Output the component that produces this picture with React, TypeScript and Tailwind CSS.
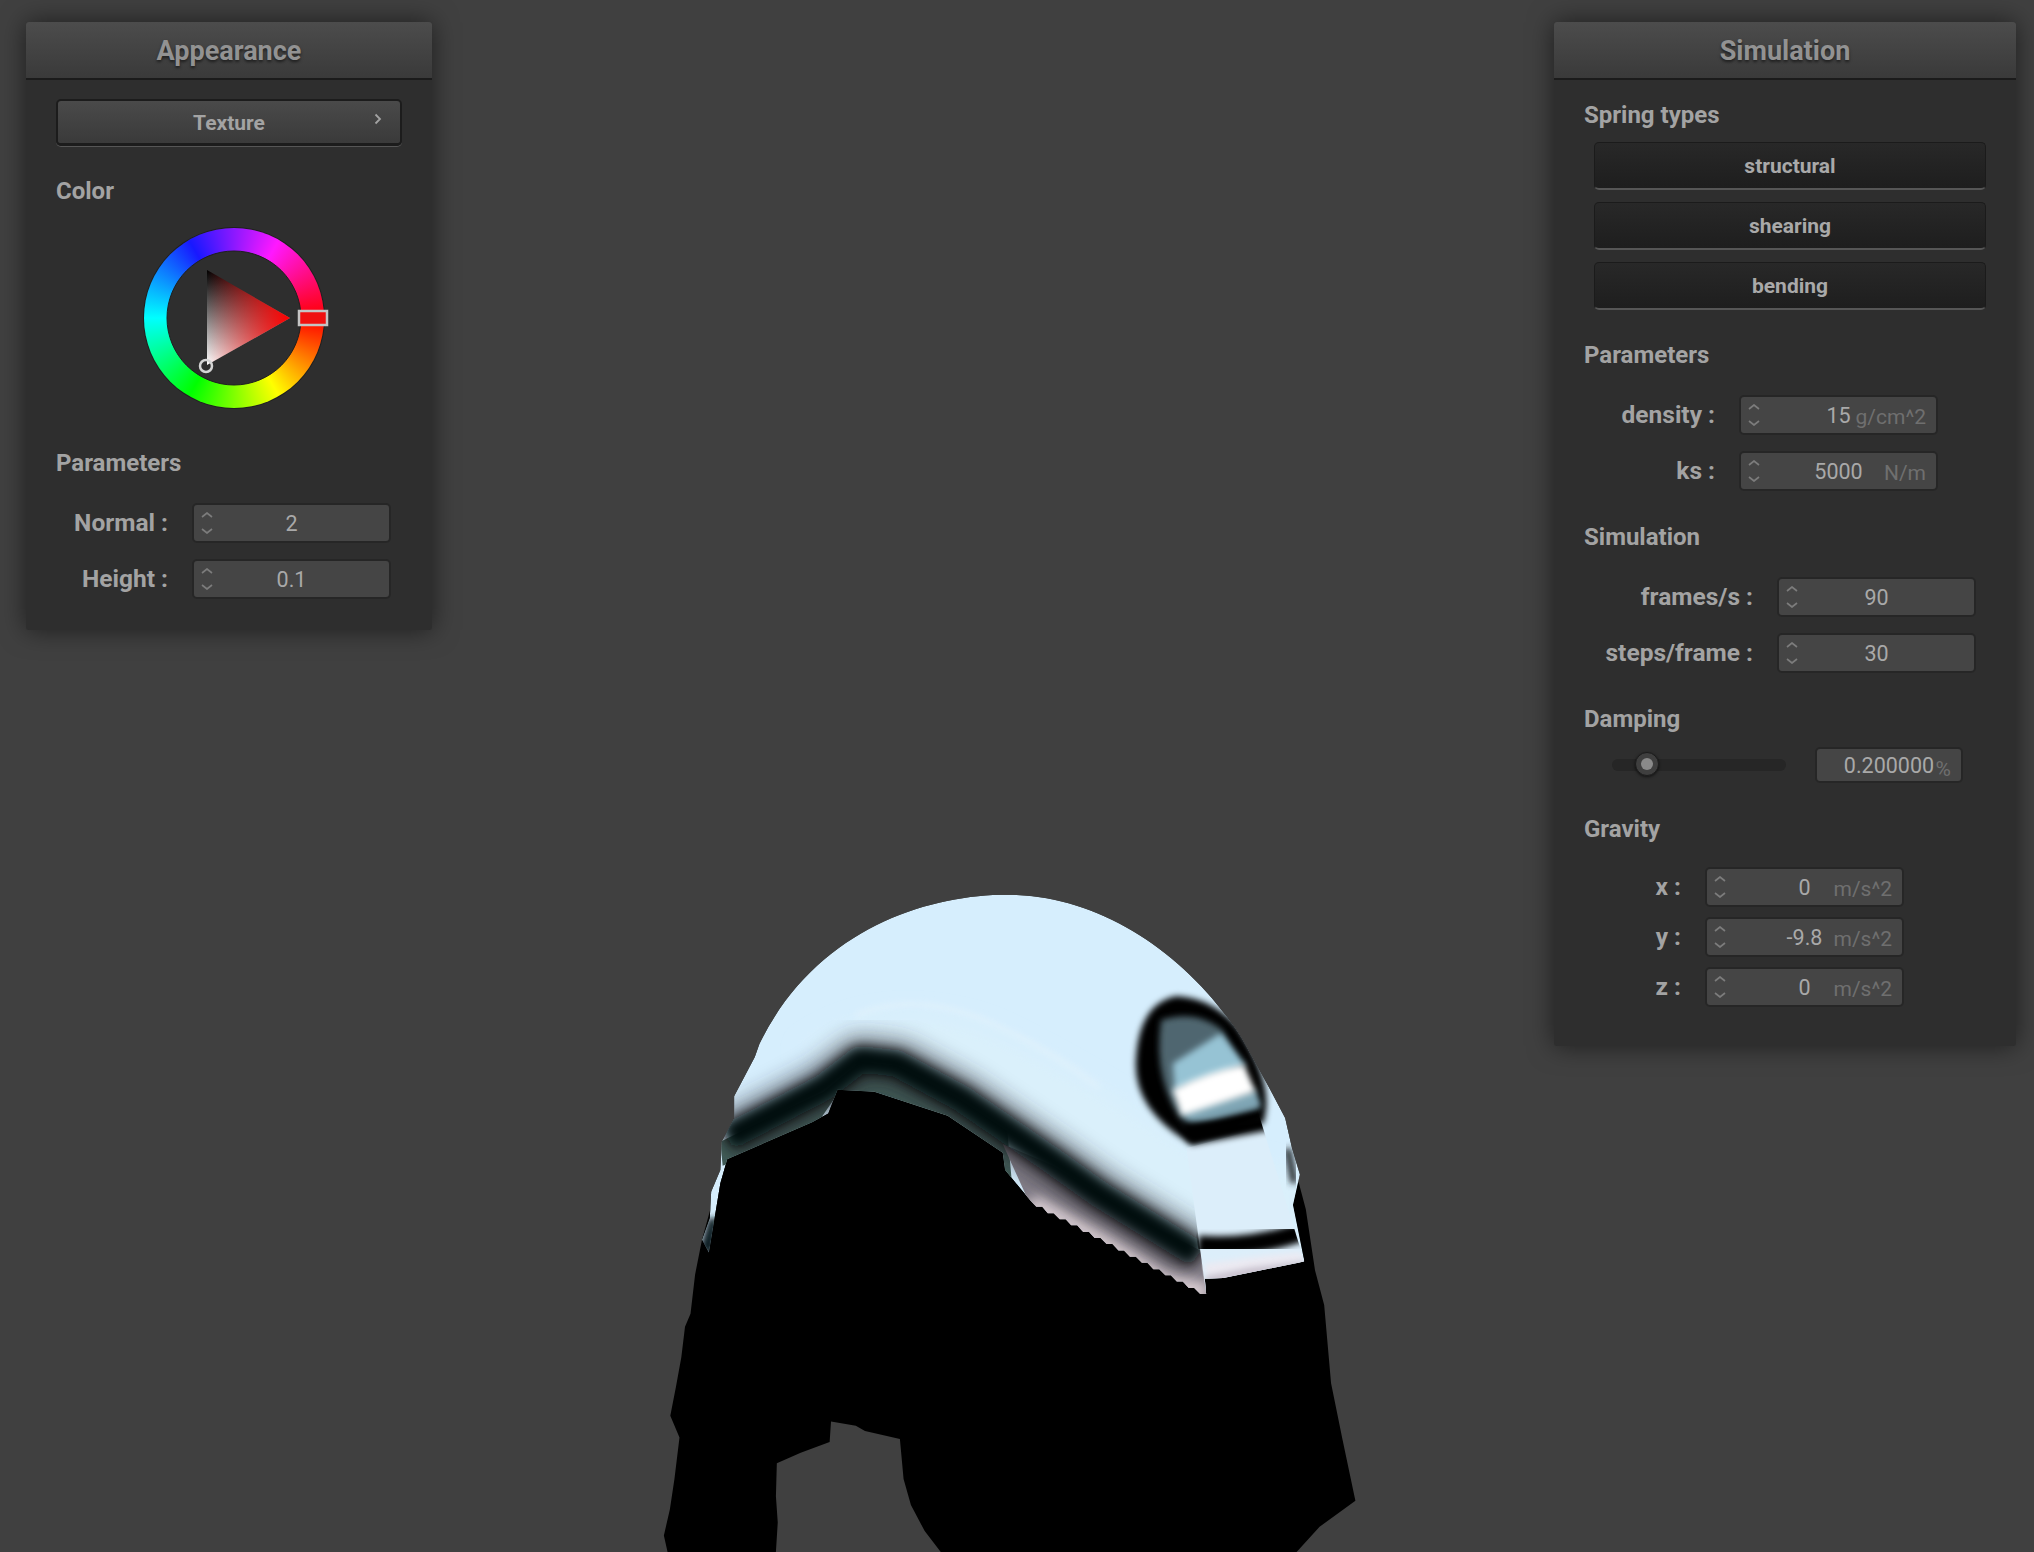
import type { ReactNode } from 'react';

function SectionLabel({ children, className }: { children: ReactNode; className: string }) {
  return <div className={`h-[26px] pl-[30px] text-[24px] leading-[26px] font-bold text-[#a3a3a3] ${className}`}>{children}</div>;
}

function PanelHeader({ title }: { title: string }) {
  return (
    <div className="flex h-[58px] items-center justify-center rounded-t-[3px] border-b-2 border-[#1b1b1b] bg-gradient-to-b from-[#4c4c4c] to-[#3a3a3a] pt-[3px] text-[27px] font-bold text-[#929292] [text-shadow:0_2px_3px_rgba(0,0,0,0.55)]">
      {title}
    </div>
  );
}

function Spinner() {
  return (
    <svg width="12" height="22" viewBox="0 0 12 22" fill="none" stroke="#7c7c7c" strokeWidth="1.7" className="absolute top-[7px] left-[7px]">
      <path d="M1 5 L6 1 L11 5" />
      <path d="M1 17 L6 21 L11 17" />
    </svg>
  );
}

function NumberField({ value, unit, spinner = true, className = 'h-[40px] w-[199px]' }: { value: string; unit?: string; spinner?: boolean; className?: string }) {
  return (
    <div className={`relative flex shrink-0 items-center justify-center rounded-[5px] border-2 border-[#262626] bg-[#454545] pt-[3px] text-[21.5px] text-[#a9a9a9] ${className}`}>
      {spinner && <Spinner />}
      {value}
      {unit && <span className="absolute top-[5px] right-[10px] text-[21px] text-[#6f6f6f]">{unit}</span>}
    </div>
  );
}

function FieldRow({ label, value, unit, labelClass, className }: { label: string; value: string; unit?: string; labelClass: string; className: string }) {
  return (
    <div className={`flex items-center gap-[24px] ${className}`}>
      <div className={`text-right text-[24.5px] font-bold text-[#a3a3a3] ${labelClass}`}>{label}</div>
      <NumberField value={value} unit={unit} />
    </div>
  );
}

function SpringButton({ label, className }: { label: string; className: string }) {
  return (
    <div className={`ml-[40px] flex h-[48px] w-[392px] items-center justify-center rounded-[5px] border border-b-2 border-[#1b1b1b] border-b-[#565656] bg-gradient-to-b from-[#282828] to-[#1e1e1e] pt-[3px] text-[21px] font-bold text-[#a9a9a9] ${className}`}>
      {label}
    </div>
  );
}

function ColorWheel() {
  return (
    <div className="relative mt-[24px] ml-[118px] h-[180px] w-[180px] rounded-full bg-[conic-gradient(from_90deg,#ff0000,#ffff00,#00ff00,#00ffff,#1818ff,#ff18ff,#ff0000)] shadow-[0_0_0_1px_#1f1f1f]">
      <svg width="184" height="184" viewBox="0 0 184 184" className="absolute top-[-2px] left-[-2px] overflow-visible">
        <defs>
          <linearGradient id="tri-value" x1="0" y1="0" x2="0" y2="1">
            <stop offset="0" stopColor="#000" />
            <stop offset="1" stopColor="#fff" />
          </linearGradient>
          <linearGradient id="tri-hue" x1="0" y1="0" x2="1" y2="0">
            <stop offset="0" stopColor="#ff0000" stopOpacity="0" />
            <stop offset="1" stopColor="#ff0000" />
          </linearGradient>
        </defs>
        <circle cx="92" cy="92" r="67" fill="#2e2e2e" stroke="#1f1f1f" />
        <path d="M65 44 L148 92 L65 139 Z" fill="url(#tri-value)" />
        <path d="M65 44 L148 92 L65 139 Z" fill="url(#tri-hue)" />
        <rect x="157" y="85" width="28" height="14" fill="#f01010" stroke="#c4c4c4" strokeWidth="2.5" />
        <circle cx="64" cy="140" r="6" fill="none" stroke="#d4d4d4" strokeWidth="2.5" />
      </svg>
    </div>
  );
}

// sawtooth along the lower edge of the cloth, from the flap back up to the fold
const teeth = Array.from({ length: 30 }, (_, i) => {
  const x = 1233 - (i * 383) / 30;
  const y = 975 - (i * 215) / 30;
  return `L${x.toFixed(0)} ${(y + (i % 2 ? 7 : 0)).toFixed(0)}`;
}).join(' ');

function ClothModel() {
  const dome = `M135 850 L152 800 L155 740 L175 690 L178 625 L205 570 L205 520 L250 430 L260 400 C380 140 620 57 800 57 C1000 57 1190 190 1310 385 L1370 500 L1405 570 L1420 640 L1437 700 L1422 770 L1447 900 L1270 938 L1230 940 L1233 975 ${teeth} L850 760 L795 690 L790 650 L670 565 L510 510 L430 505 L410 560 L375 580 L190 665 L175 720 L150 880 Z`;
  const band = 'M190 615 L300 555 L400 500 L480 435 L560 445 L700 525 L790 590 L900 670 L1000 745 L1100 810 L1215 885';
  return (
    <svg viewBox="0 0 1568 1568" preserveAspectRatio="none" className="absolute top-[870px] left-[640px] h-[682px] w-[720px]">
      <defs>
        <clipPath id="dome-clip">
          <path d={dome} />
        </clipPath>
        <clipPath id="flap-clip">
          <path d="M1150 470 L1300 400 L1447 900 L1233 975 Z" />
        </clipPath>
        <filter id="blur-halo" x="-20%" y="-20%" width="140%" height="140%">
          <feGaussianBlur stdDeviation="24" />
        </filter>
        <filter id="blur-wide" x="-20%" y="-20%" width="140%" height="140%">
          <feGaussianBlur stdDeviation="14" />
        </filter>
        <filter id="blur-soft" x="-20%" y="-20%" width="140%" height="140%">
          <feGaussianBlur stdDeviation="7" />
        </filter>
      </defs>
      <path
        d="M135 850 L120 930 L110 1020 L98 1050 L90 1120 L78 1190 L66 1255 L86 1305 L75 1400 L65 1470 L52 1530 L60 1568 L296 1568 L300 1500 L296 1440 L298 1364 L350 1340 L413 1315 L416 1268 L470 1278 L490 1290 L566 1308 L574 1400 L590 1460 L620 1520 L655 1568 L1430 1568 L1480 1510 L1558 1450 L1530 1310 L1505 1180 L1490 1000 L1470 920 L1450 780 L1435 720 L1300 500 L600 400 L200 600 Z"
        fill="#000"
      />
      <g clipPath="url(#dome-clip)">
        <path d={dome} fill="#d6eefd" />
        <path d="M350 420 Q520 280 760 370 Q960 470 1200 640 L1440 700 L1440 900 L1230 960 L800 620 L450 440 Z" fill="#daf0fb" filter="url(#blur-halo)" />
        <path d="M470 335 Q610 270 790 365 Q900 420 1000 500" fill="none" stroke="#e4f3fb" strokeWidth="7" filter="url(#blur-soft)" />
        <path d="M175 625 L300 560 L400 510 L480 440 L560 450 L700 530 L800 600 L810 720 L670 575 L510 520 L430 515 L375 600 L180 680 Z" fill="#415c57" />
        <path d="M790 630 L900 680 L1100 810 L1230 880 L1240 985 L1140 945 L1000 850 L850 770 Z" fill="#85808a" />
        <path d="M850 765 L1000 848 L1140 940 L1235 975" fill="none" stroke="#d8ccd2" strokeWidth="44" filter="url(#blur-wide)" />
        <path d={band} fill="none" stroke="#26262e" strokeWidth="110" strokeLinejoin="round" opacity="0.55" filter="url(#blur-halo)" />
        <path d={band} fill="none" stroke="#060e0f" strokeWidth="60" strokeLinejoin="round" filter="url(#blur-wide)" />
        <path d="M130 870 L150 800 L170 800 L160 890 Z" fill="#0d1c20" filter="url(#blur-soft)" />
        <path d="M1170 305 Q1100 320 1095 440 Q1090 540 1200 612 Q1280 590 1345 570 Q1365 490 1290 370 Q1240 310 1170 305 Z" fill="#050505" stroke="#050505" strokeWidth="30" filter="url(#blur-soft)" />
        <path d="M1135 345 Q1210 320 1265 365 L1350 545 L1190 590 Q1115 490 1135 345 Z" fill="#4f6670" filter="url(#blur-soft)" />
        <path d="M1160 445 L1265 375 L1320 450 L1165 510 Z" fill="#96c3d4" filter="url(#blur-soft)" />
        <path d="M1180 545 L1340 505 L1352 545 L1195 585 Z" fill="#7fa6b5" filter="url(#blur-soft)" />
        <path d="M1160 505 Q1240 462 1315 448 L1340 510 L1180 565 Z" fill="#ffffff" filter="url(#blur-soft)" />
        <g clipPath="url(#flap-clip)">
          <path d="M1190 640 L1330 600 L1380 590 L1447 900 L1233 975 Z" fill="#dceefa" />
          <path d="M1170 578 Q1260 590 1370 558 L1385 595 L1200 632 Z" fill="#050505" filter="url(#blur-soft)" />
          <path d="M1215 862 Q1330 872 1440 832" fill="none" stroke="#050505" strokeWidth="44" filter="url(#blur-soft)" />
          <path d="M1228 905 L1320 892 L1440 878 L1447 900 L1233 938 Z" fill="#eceaf2" filter="url(#blur-soft)" />
          <path d="M1230 935 L1330 915 L1447 900 L1447 912 L1233 952 Z" fill="#c8bcc8" filter="url(#blur-soft)" />
        </g>
        <path d="M1410 640 L1425 720" fill="none" stroke="#20262c" strokeWidth="16" filter="url(#blur-soft)" />
      </g>
    </svg>
  );
}

export default function App() {
  return (
    <div className="relative flex h-[1552px] w-[2034px] items-start justify-between overflow-hidden bg-[#404040] pt-[22px] pr-[18px] pl-[26px] font-['Roboto',sans-serif]">
      <ClothModel />

      <div className="relative h-[608px] w-[406px] rounded-[3px] bg-[#2e2e2e] shadow-[0_0_26px_rgba(0,0,0,0.55)]">
        <PanelHeader title="Appearance" />
        <div className="relative mt-[19px] ml-[30px] flex h-[47px] w-[346px] items-center justify-center rounded-[5px] border-2 border-b-[3px] border-[#1c1c1c] border-b-[#1c1c1c] bg-gradient-to-b from-[#4a4a4a] to-[#3a3a3a] pt-[3px] text-[21px] font-bold text-[#a3a3a3] shadow-[0_1px_0_#565656]">
          Texture
          <svg width="8" height="12" viewBox="0 0 8 12" fill="none" stroke="#a3a3a3" strokeWidth="1.8" className="absolute top-[12px] right-[18px]">
            <path d="M1.5 1.5 L6 6 L1.5 10.5" />
          </svg>
        </div>
        <SectionLabel className="mt-[32px]">Color</SectionLabel>
        <ColorWheel />
        <SectionLabel className="mt-[42px]">Parameters</SectionLabel>
        <FieldRow label="Normal :" value="2" labelClass="w-[142px]" className="mt-[27px]" />
        <FieldRow label="Height :" value="0.1" labelClass="w-[142px]" className="mt-[16px]" />
      </div>

      <div className="relative h-[1024px] w-[462px] rounded-[3px] bg-[#2e2e2e] shadow-[0_0_26px_rgba(0,0,0,0.55)]">
        <PanelHeader title="Simulation" />
        <SectionLabel className="mt-[22px]">Spring types</SectionLabel>
        <SpringButton label="structural" className="mt-[14px]" />
        <SpringButton label="shearing" className="mt-[12px]" />
        <SpringButton label="bending" className="mt-[12px]" />

        <SectionLabel className="mt-[32px]">Parameters</SectionLabel>
        <FieldRow label="density :" value="15" unit="g/cm^2" labelClass="w-[161px]" className="mt-[27px]" />
        <FieldRow label="ks :" value="5000" unit="N/m" labelClass="w-[161px]" className="mt-[16px]" />

        <SectionLabel className="mt-[33px]">Simulation</SectionLabel>
        <FieldRow label="frames/s :" value="90" labelClass="w-[199px]" className="mt-[27px]" />
        <FieldRow label="steps/frame :" value="30" labelClass="w-[199px]" className="mt-[16px]" />

        <SectionLabel className="mt-[33px]">Damping</SectionLabel>
        <div className="mt-[15px] ml-[58px] flex h-[36px] items-center">
          <div className="relative h-[12px] w-[174px] rounded-full bg-[#262626]">
            <div className="absolute top-[-7px] left-[23px] flex h-[24px] w-[24px] items-center justify-center rounded-full border border-[#1c1c1c] bg-[#3f3f3f] shadow-[0_1px_3px_rgba(0,0,0,0.6)]">
              <div className="h-[12px] w-[12px] rounded-full bg-[#8a8a8a]" />
            </div>
          </div>
          <NumberField value="0.200000" unit="%" spinner={false} className="ml-[29px] h-[36px] w-[148px]" />
        </div>

        <SectionLabel className="mt-[33px]">Gravity</SectionLabel>
        <FieldRow label="x :" value="0" unit="m/s^2" labelClass="w-[127px]" className="mt-[25px]" />
        <FieldRow label="y :" value="-9.8" unit="m/s^2" labelClass="w-[127px]" className="mt-[10px]" />
        <FieldRow label="z :" value="0" unit="m/s^2" labelClass="w-[127px]" className="mt-[10px]" />
      </div>
    </div>
  );
}
